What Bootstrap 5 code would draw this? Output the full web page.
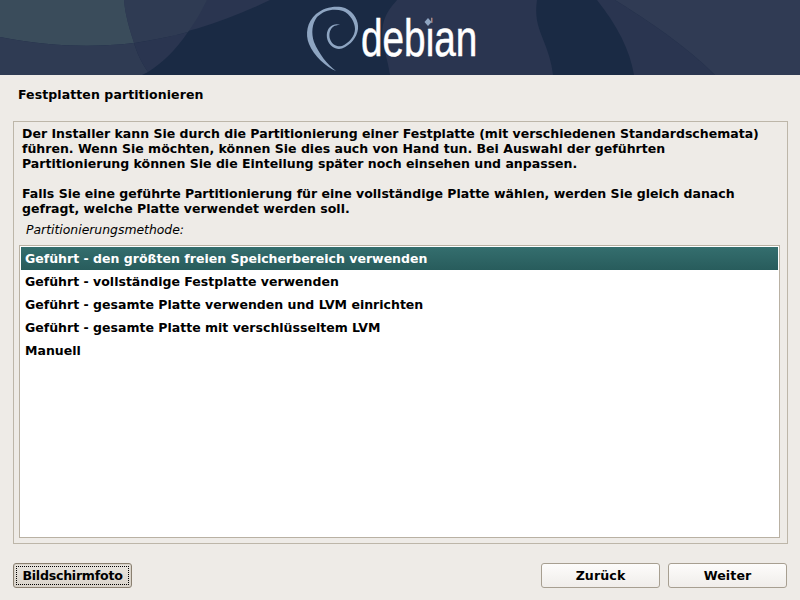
<!DOCTYPE html>
<html lang="de"><head><meta charset="utf-8"><title>Debian Installer</title>
<link href="https://cdn.jsdelivr.net/npm/bootstrap@5.3.0/dist/css/bootstrap.min.css" rel="stylesheet">
<style>
html,body{height:100%}
body{background:#eeebe7;color:#000;font-family:"DejaVu Sans",sans-serif;font-size:12.53px;font-weight:700;line-height:15px;width:800px;height:600px;overflow:hidden}
.banner{height:75px;background:#1a2a44;position:relative;overflow:hidden}
.banner svg.bg{display:block}
.logo{position:absolute;left:300px;top:0;width:70px;height:75px}
.wordmark{position:absolute;left:361px;top:12px;font-family:"Liberation Sans",sans-serif;font-weight:400;font-size:52px;line-height:52px;color:#fff;transform:scaleX(.745);transform-origin:left top;-webkit-text-stroke:.5px #fff}
.gem{position:absolute;left:422px;top:16px;width:12px;height:12px}
.title{height:46px;padding:12px 0 0 18px;letter-spacing:.08px}
.frame{margin:0 12px 0 13px;height:423px;border:1px solid #bdb6a9;padding:4px 5px 4px 8px}
.intro{margin:0 0 6px;white-space:pre-line}
.caption{font-weight:400;font-style:italic;font-size:12.4px;padding-left:4px;height:23px;margin-bottom:0}
.picker{border:1px solid #b9b1a3;background:#fff;height:293px;padding:1px;margin:0 2px 0 -3px}
.pick{height:23px;padding:4px 0 0 4px}
.pick.on{color:#fff;background-image:linear-gradient(#346e6e,#285c5c)}
.foot{padding:19px 13px 0 13px}
.dbtn{height:25px;width:119px;padding:0;border:1px solid #a79f91;border-radius:3px;background:linear-gradient(#fdfcfb,#f0edea);font-size:12.6px;font-weight:700;line-height:21px;letter-spacing:.1px;color:#000;font-family:inherit}
.dbtn.focused{background:linear-gradient(#e9e5df,#d9d3ca);border-color:#8a8071;box-shadow:inset 0 0 0 1px #d9d3ca;outline:1px dotted #000;outline-offset:-4px;letter-spacing:-.25px}
</style></head><body>
<div class="banner">
<svg class="bg" width="800" height="75" viewBox="0 0 800 75" aria-hidden="true">
<rect width="800" height="75" fill="#1a2a44"/>
<path d="M0 0H270C225 22 185 34 134 43C90 48 45 46 0 37Z" fill="#2a3550"/>
<path d="M134 43C170 37 180 34 188 32C176 50 162 63 148 72C141 62 137 53 134 43Z" fill="#2a3550"/>
<path d="M0 0H124C125 15 130 30 134 43C90 48 45 46 0 37Z" fill="#3a4c5b"/>
<path d="M124 0H207C201 12 196 21 188 32C170 37 152 40 134 43C130 30 125 15 124 0Z" fill="#2f3b53"/>
<path d="M0 37C45 46 90 48 134 43C137 53 141 62 148 72L142 75H0Z" fill="#2f3b53"/>
<path d="M397 0H537C534 22 540 30 546 47C550 58 552 66 553 75H390C387 55 380 40 383 25C385 14 391 7 397 0Z" fill="#2a3550"/>
<path d="M597 0H615C650 22 685 45 715 75H634C630 50 617 25 597 0Z" fill="#2a3550"/>
<path d="M615 0H800V75H715C685 45 650 22 615 0Z" fill="#303b54"/>
</svg>
<svg class="logo" viewBox="0 0 70 75" aria-hidden="true">
<path fill="#8ea5c2" fill-rule="evenodd" d="M36 71C26 67 14 56 9 44C5 34 7 22 16 14C24 7 37 5 45 8C54 12 59 21 58 29C57 37 51 45 42 48.5C36 50 30 47 27.5 40C25.5 33 28 27 33 25C35.5 24 38 24 40 25C37 25 35 25.5 33.5 26.5C30 29 28.5 34 30 39C32 45 37 47 42 46C49 43 55 36 55 29C55 22 50 14 43 11C34 8 24 10 17 17C12 24 11 33 14 42C19 54 27 64 36 71Z"/>
</svg>
<div class="wordmark">debian</div>
<svg class="gem" viewBox="0 0 12 12" aria-hidden="true"><rect x="2.5" y="1" width="7" height="9" fill="#2a3550"/><path d="M6 2L9.5 6L6 10L2.5 6Z" fill="#8ea5c2"/></svg>
</div>
<div class="title">Festplatten partitionieren</div>
<div class="frame">
<p class="intro">Der Installer kann Sie durch die Partitionierung einer Festplatte (mit verschiedenen Standardschemata)
führen. Wenn Sie möchten, können Sie dies auch von Hand tun. Bei Auswahl der geführten
Partitionierung können Sie die Einteilung später noch einsehen und anpassen.

Falls Sie eine geführte Partitionierung für eine vollständige Platte wählen, werden Sie gleich danach
gefragt, welche Platte verwendet werden soll.</p>
<div class="caption">Partitionierungsmethode:</div>
<div class="picker">
<div class="pick on">Geführt - den größten freien Speicherbereich verwenden</div>
<div class="pick">Geführt - vollständige Festplatte verwenden</div>
<div class="pick">Geführt - gesamte Platte verwenden und LVM einrichten</div>
<div class="pick">Geführt - gesamte Platte mit verschlüsseltem LVM</div>
<div class="pick">Manuell</div>
</div>
</div>
<div class="foot d-flex justify-content-between">
<button class="dbtn focused" type="button">Bildschirmfoto</button>
<div class="d-flex gap-2"><button class="dbtn" type="button">Zurück</button><button class="dbtn" type="button">Weiter</button></div>
</div>
</body></html>
